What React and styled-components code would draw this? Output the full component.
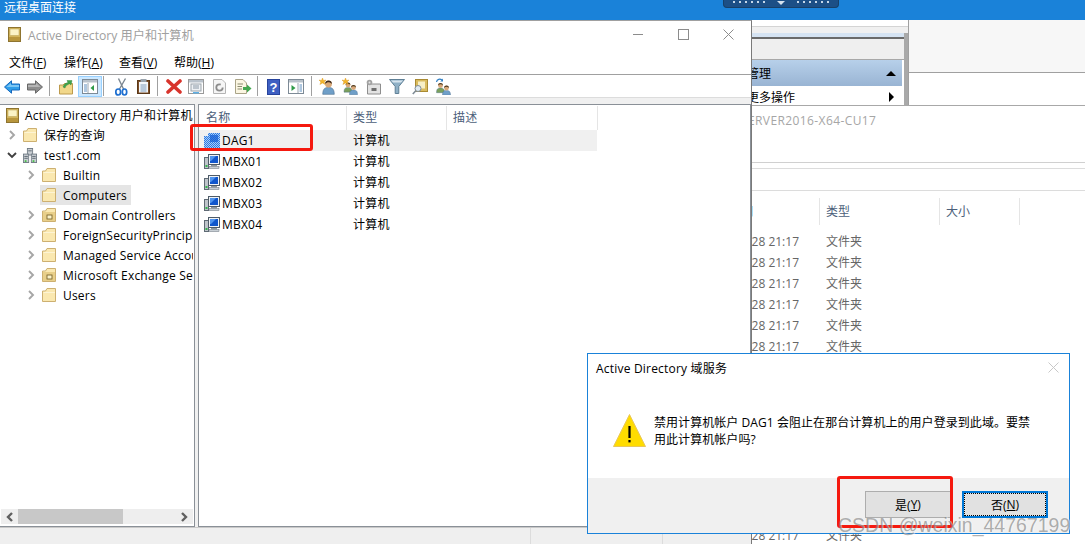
import React from "react";
import styled, { createGlobalStyle } from "styled-components";

const treeItems = [
  { label: "保存的查询", depth: 1, icon: "folder", arrow: "closed" },
  { label: "test1.com", depth: 1, icon: "domain", arrow: "open" },
  { label: "Builtin", depth: 2, icon: "folder", arrow: "closed" },
  { label: "Computers", depth: 2, icon: "folder", selected: true },
  { label: "Domain Controllers", depth: 2, icon: "ou", arrow: "closed" },
  { label: "ForeignSecurityPrincipals", depth: 2, icon: "folder", arrow: "closed" },
  { label: "Managed Service Accounts", depth: 2, icon: "folder", arrow: "closed" },
  { label: "Microsoft Exchange Security Groups", depth: 2, icon: "ou", arrow: "closed" },
  { label: "Users", depth: 2, icon: "folder", arrow: "closed" }
];

const computers = ["DAG1", "MBX01", "MBX02", "MBX03", "MBX04"];
const menus = [["文件", "F"], ["操作", "A"], ["查看", "V"], ["帮助", "H"]];
const fileRows = Array.from({ length: 15 }, (_, i) => i);

const Person = ({ x, y, s = 1, body = "#6f9fc8", hair = "#5a3a22", face = "#d9a878" }) => (
  <g transform={`translate(${x} ${y}) scale(${s})`}>
    <path d="M-5 9 C-5 4 -3 3 0 3 C3 3 5 4 5 9 Z" fill={body} stroke="#44688a" strokeWidth=".5" />
    <circle cx="0" cy="0" r="3" fill={face} />
    <path d="M-3 0 C-3 -4 3 -4 3 0 C1 -2 -1 -2 -3 0 Z" fill={hair} />
  </g>
);

const Star = ({ x, y }) => (
  <path
    transform={`translate(${x} ${y})`}
    d="M0 -3.5 L1 -1 L3.5 -1.5 L1.6 .4 L2.6 3 L0 1.5 L-2.6 3 L-1.6 .4 L-3.5 -1.5 L-1 -1 Z"
    fill="#f4b62c"
    stroke="#d98f10"
    strokeWidth=".4"
  />
);

const BackIcon = () => (
  <svg width="16" height="14" viewBox="0 0 16 14">
    <path d="M.5 7 L7.5 .8 V4 H15.5 V10 H7.5 V13.2 Z" fill="#2f9de8" stroke="#1668bd" />
    <path d="M2.5 7 L7 3 V5 H15 V7 Z" fill="#7cc6f4" />
  </svg>
);

const ForwardIcon = () => (
  <svg width="16" height="14" viewBox="0 0 16 14">
    <path d="M15.5 7 L8.5 .8 V4 H.5 V10 H8.5 V13.2 Z" fill="#8e8e8e" stroke="#686868" />
    <path d="M1 5 H9 V3 L13.5 7 H1 Z" fill="#b5b5b5" />
  </svg>
);

const FolderUpIcon = () => (
  <svg width="16" height="16" viewBox="0 0 16 16">
    <path d="M1.5 6 H5 L6.5 4.5 H14.5 V15 H1.5 Z" fill="#f1d78a" stroke="#bd9a4c" />
    <path d="M5 8 C6 5 8 4 10 3.5 L9 1.5 L14 1.5 L13 6 L11.5 4.8 C9.5 5.5 7.5 7 7 9 Z" fill="#3fa34d" stroke="#2a7d36" strokeWidth=".4" />
  </svg>
);

const WindowBase = ({ children, light }) => (
  <svg width="16" height="15" viewBox="0 0 16 15">
    <rect x=".5" y=".5" width="15" height="14" fill="#fff" stroke={light ? "#9a9a9a" : "#7d8a96"} />
    <rect x="1" y="1" width="14" height="2.5" fill="#b9c2cb" />
    {children}
  </svg>
);

const TreeViewIcon = () => (
  <WindowBase>
    <path d="M6 4 V14" stroke="#9aa6b1" />
    <path d="M2 6 H5 M2 8 H5 M2 10 H5 M2 12 H5" stroke="#5e8fc0" />
    <path d="M12 6 L8.5 9 L12 12 Z" fill="#2f9b48" />
  </WindowBase>
);

const ViewIcon = () => (
  <WindowBase>
    <path d="M10 4 V14" stroke="#9aa6b1" />
    <path d="M3.5 6 L7.5 9 L3.5 12 Z" fill="#2f9b48" />
    <path d="M11.5 6 H14 M11.5 8 H14 M11.5 10 H14 M11.5 12 H14" stroke="#5e8fc0" />
  </WindowBase>
);

const CutIcon = () => (
  <svg width="13" height="18" viewBox="0 0 13 18">
    <path d="M10.5 .5 L4.5 11 M3.5 .5 L8.5 11" stroke="#7c8791" strokeWidth="1.4" fill="none" />
    <ellipse cx="3.2" cy="14" rx="2.4" ry="3" fill="none" stroke="#1e6fd0" strokeWidth="1.7" />
    <ellipse cx="9.5" cy="14" rx="2.2" ry="3" fill="none" stroke="#1e6fd0" strokeWidth="1.7" />
  </svg>
);

const PasteIcon = () => (
  <svg width="13" height="15" viewBox="0 0 13 15">
    <rect x=".5" y="1.5" width="12" height="13" fill="#7d4f2a" stroke="#5b3818" />
    <rect x="2" y="3" width="9" height="10.5" fill="#f4f7fa" />
    <rect x="3.5" y="0" width="6" height="3" fill="#9aa4ad" />
    <path d="M3.5 6 H9.5 M3.5 8 H9.5 M3.5 10 H9.5 M3.5 12 H9.5" stroke="#7f9cba" />
  </svg>
);

const DeleteIcon = () => (
  <svg width="16" height="15" viewBox="0 0 16 15">
    <path d="M2 2 L14 13 M14 2 L2 13" stroke="#d8342c" strokeWidth="3.6" strokeLinecap="round" />
  </svg>
);

const PropsIcon = () => (
  <WindowBase light>
    <rect x="3" y="5" width="10" height="7" fill="#eef1f4" stroke="#9aa3ab" />
    <path d="M5 7 H11 M5 9 H11" stroke="#8a98a6" />
    <rect x="5" y="13" width="6" height="1.5" fill="#5eb0e5" />
  </WindowBase>
);

const RefreshIcon = () => (
  <svg width="13" height="15" viewBox="0 0 13 15">
    <path d="M.5 .5 H9 L12.5 4 V14.5 H.5 Z" fill="#f5f5f5" stroke="#b4b4b4" />
    <circle cx="6.5" cy="8.5" r="3.2" fill="none" stroke="#8c8c8c" strokeWidth="1.8" strokeDasharray="16 4" />
  </svg>
);

const ExportIcon = () => (
  <svg width="17" height="15" viewBox="0 0 17 15">
    <path d="M.5 .5 H8 L11.5 4 V14.5 H.5 Z" fill="#fbf6e2" stroke="#aaa488" />
    <path d="M2.5 5 H8 M2.5 7.5 H7 M2.5 10 H7" stroke="#8b8b70" />
    <path d="M8 8 H12 V5.5 L16.5 9.5 L12 13.5 V11 H8 Z" fill="#43a84f" />
  </svg>
);

const HelpIcon = () => (
  <svg width="13" height="16" viewBox="0 0 13 16">
    <rect width="13" height="16" fill="#27439c" />
    <rect x="1" y="1" width="11" height="14" fill="#3e5fc2" />
    <text x="6.5" y="13" textAnchor="middle" fontSize="13" fontWeight="700" fill="#fff" fontFamily="Liberation Sans">?</text>
  </svg>
);

const NewUserIcon = () => (
  <svg width="16" height="17" viewBox="0 0 16 17">
    <Person x={9.5} y={6} s={1.15} hair="#3c2a1c" />
    <Star x={3.5} y={3.5} />
  </svg>
);

const NewGroupIcon = () => (
  <svg width="16" height="17" viewBox="0 0 16 17">
    <Person x={6} y={7} s={.8} body="#7aa05c" hair="#4b3a22" />
    <Person x={11.5} y={9.5} s={.8} hair="#4b3a22" />
    <Star x={3.5} y={3.5} />
  </svg>
);

const NewOuIcon = () => (
  <svg width="16" height="16" viewBox="0 0 16 16">
    <path d="M1.5 5 H14.5 V15 H1.5 Z" fill="#e3e3e3" stroke="#8e8e8e" />
    <rect x="5.5" y="9" width="5" height="3" fill="#6e6e6e" />
    <circle cx="3.5" cy="3.5" r="2.8" fill="#a3a3a3" />
    <circle cx="3.5" cy="3.5" r="1" fill="#e5e5e5" />
  </svg>
);

const FilterIcon = () => (
  <svg width="16" height="15" viewBox="0 0 16 15">
    <path d="M.5 .5 H15.5 L9.8 7.5 V14.5 H6.2 V7.5 Z" fill="#8fb0c6" stroke="#5f7f95" />
    <path d="M2 1.5 H14 L12 3.5 H4 Z" fill="#d6e4ee" />
  </svg>
);

const FindIcon = () => (
  <svg width="16" height="16" viewBox="0 0 16 16">
    <rect x="3.5" y=".5" width="12" height="12" fill="#d9bb5e" stroke="#a98a33" />
    <rect x="6" y="2.5" width="7" height="7" fill="#f7efc6" />
    <circle cx="6" cy="9.5" r="3" fill="#dfeaf2" stroke="#7f8c96" />
    <path d="M3.8 11.8 L.8 15" stroke="#7f8c96" strokeWidth="1.6" />
  </svg>
);

const MoveIcon = () => (
  <svg width="16" height="17" viewBox="0 0 16 17">
    <Person x={5.5} y={7.5} s={.8} body="#7aa05c" hair="#4b3a22" />
    <Person x={11.5} y={10} s={.8} hair="#4b3a22" />
    <path d="M1.5 4 C2 1 5 .5 7 2" fill="none" stroke="#2f7fc4" strokeWidth="1.2" />
    <path d="M8 .5 V3.5 H5.2 Z" fill="#2f7fc4" />
  </svg>
);

const RootIcon = () => (
  <svg width="13" height="15" viewBox="0 0 13 15">
    <rect x=".5" y=".5" width="12" height="14" fill="#d3b55c" stroke="#8e7430" />
    <rect x="2" y="2" width="9" height="6.5" fill="#fbf3c6" stroke="#b89f52" strokeWidth=".5" />
    <rect x="1" y="10" width="11" height="4" fill="#b8963c" />
  </svg>
);

const FolderIcon = ({ badge }) => (
  <svg width="14" height="14" viewBox="0 0 14 14">
    <path d="M.5 3 H3.5 L5 .5 H13.5 V13.5 H.5 Z" fill="#fae8b0" stroke="#cdb071" />
    <path d="M1.5 4 H13 V5 H1.5 Z" fill="#fdf4d4" />
    {badge && (
      <>
        <rect x="1" y="4" width="12" height="9" fill="#e8cf8a" />
        <rect x="5" y="7" width="5" height="4" fill="#fbf2c9" stroke="#6f5a22" strokeWidth=".8" />
      </>
    )}
  </svg>
);

const DomainIcon = () => (
  <svg width="14" height="15" viewBox="0 0 16 16" preserveAspectRatio="none">
    <rect x="5" y=".5" width="6" height="7" fill="#c9ced3" stroke="#6f7a84" />
    <rect x=".5" y="6.5" width="6" height="9" fill="#c9ced3" stroke="#6f7a84" />
    <rect x="9.5" y="6.5" width="6" height="9" fill="#c9ced3" stroke="#6f7a84" />
    <path d="M6 3 H10 M1.5 9 H5.5 M1.5 11 H5.5 M10.5 9 H14.5 M10.5 11 H14.5" stroke="#5b6670" />
    <rect x="2" y="13" width="2" height="2" fill="#4cc24c" />
    <rect x="11" y="13" width="2" height="2" fill="#4cc24c" />
  </svg>
);

const ComputerIcon = () => (
  <svg width="16" height="15" viewBox="0 0 16 15">
    <rect x=".5" y="3.5" width="4" height="11" fill="#bfc5ca" stroke="#5f6a74" />
    <rect x="1.5" y="11" width="2" height="2" fill="#33b54a" />
    <rect x="4.5" y=".5" width="11" height="10" fill="#f0f3f6" stroke="#4e5b68" />
    <rect x="6" y="2" width="8" height="7" fill="#1056cc" />
    <path d="M6 2 H12 L7 7 H6 Z" fill="#4f94ee" />
    <rect x="7" y="11" width="6" height="1.5" fill="#8d979f" />
    <rect x="5" y="12.5" width="10" height="2" fill="#c8cfd5" stroke="#66717b" strokeWidth=".5" />
  </svg>
);

// the selected computer in the list is drawn blue and dithered
const DitheredComputerIcon = () => (
  <svg width="16" height="15" viewBox="0 0 16 15">
    <defs>
      <pattern id="dither" width="2" height="2" patternUnits="userSpaceOnUse">
        <rect width="2" height="2" fill="#2a78e4" />
        <rect width="1" height="1" fill="#a9cdf6" />
        <rect x="1" y="1" width="1" height="1" fill="#a9cdf6" />
      </pattern>
    </defs>
    <rect y="3" width="5" height="12" fill="url(#dither)" />
    <rect x="4" width="12" height="15" fill="url(#dither)" />
    <rect x="6" y="2" width="8" height="7" fill="#1a62d6" opacity=".75" />
  </svg>
);

const Chevron = ({ open, small }) => (
  <svg width={open ? 10 : 7} height={open ? 7 : 10} viewBox={open ? "0 0 10 7" : "0 0 7 10"}>
    <path
      d={open ? "M1 1 L5 5 L9 1" : "M1 1 L5 5 L1 9"}
      fill="none"
      stroke={open ? "#404040" : small ? "#606060" : "#a6a6a6"}
      strokeWidth={small ? 2.4 : 1.9}
    />
  </svg>
);

const CloseMark = ({ color, size }) => (
  <svg width={size} height={size} viewBox="0 0 11 11">
    <path d="M.5 .5 L10.5 10.5 M10.5 .5 L.5 10.5" stroke={color} />
  </svg>
);

const WarnIcon = () => (
  <svg width="33" height="33" viewBox="0 0 33 33">
    <path d="M16.5 .5 L32.5 32.5 H.5 Z" fill="#ffdc00" stroke="#e9c75a" />
    <rect x="15.4" y="12" width="2.2" height="12" fill="#000" />
    <rect x="15.4" y="26" width="2.2" height="2.4" fill="#000" />
  </svg>
);

const treeIcon = item => {
  if (item.icon === "domain") return <DomainIcon />;
  return <FolderIcon badge={item.icon === "ou"} />;
};

export default function App() {
  return (
    <Page>
      <GlobalStyle />
      <RemoteBar>
        <RemoteTitle>远程桌面连接</RemoteTitle>
        <ConnectionPill>
          <Dots>{[0, 1, 2, 3, 4, 5].map(i => <Dot key={i} />)}</Dots>
          <PillArrow />
          <Dots>{[0, 1, 2, 3, 4, 5].map(i => <Dot key={i} />)}</Dots>
        </ConnectionPill>
      </RemoteBar>

      <Desktop>
        <BackWindow>
          <BackTop>
            <ActionsColumn>
              <BackStrip />
              <ActionsBody>
                <ActionsPanel>
                  <PanelHead />
                  <PanelBlue>
                    <span>管理</span>
                    <UpTriangle />
                  </PanelBlue>
                  <PanelItem>
                    <span>更多操作</span>
                    <RightTriangle />
                  </PanelItem>
                </ActionsPanel>
                <ActionsRail />
              </ActionsBody>
            </ActionsColumn>
            <BackFill>
              <BackFillGrey />
            </BackFill>
          </BackTop>
          <PathBox>SERVER2016-X64-CU17</PathBox>
          <PathGap />
          <FileHead>
            <FileHeadCell $first>修改日期</FileHeadCell>
            <FileHeadCell>类型</FileHeadCell>
            <FileHeadCell>大小</FileHeadCell>
          </FileHead>
          <FileList>
            {fileRows.map(i => (
              <FileRow key={i}>
                <FileDate>2021/7/28 21:17</FileDate>
                <FileType>文件夹</FileType>
              </FileRow>
            ))}
          </FileList>
        </BackWindow>

        <AdWindow>
          <TitleRow>
            <RootIcon />
            <TitleText>Active Directory 用户和计算机</TitleText>
            <WinControls>
              <MinMark />
              <MaxMark />
              <CloseMark color="#8c8c8c" size={11} />
            </WinControls>
          </TitleRow>
          <MenuRow>
            {menus.map(([name, key]) => (
              <MenuItem key={key}>
                {name}(<u>{key}</u>)
              </MenuItem>
            ))}
          </MenuRow>
          <Toolbar>
            <Tool $w={22}><BackIcon /></Tool>
            <Tool $w={24}><ForwardIcon /></Tool>
            <Sep $l={2} $r={4} />
            <Tool $w={24}><FolderUpIcon /></Tool>
            <Tool $w={24} $active><TreeViewIcon /></Tool>
            <Sep $l={1} $r={6} />
            <Tool $w={22}><CutIcon /></Tool>
            <Tool $w={22}><PasteIcon /></Tool>
            <Sep $l={3} $r={5} />
            <Tool $w={22}><DeleteIcon /></Tool>
            <Tool $w={22}><PropsIcon /></Tool>
            <Tool $w={24}><RefreshIcon /></Tool>
            <Tool $w={24}><ExportIcon /></Tool>
            <Sep $l={2} $r={4} />
            <Tool $w={22}><HelpIcon /></Tool>
            <Tool $w={24}><ViewIcon /></Tool>
            <Sep $l={3} $r={4} />
            <Tool $w={22}><NewUserIcon /></Tool>
            <Tool $w={24}><NewGroupIcon /></Tool>
            <Tool $w={23}><NewOuIcon /></Tool>
            <Tool $w={23}><FilterIcon /></Tool>
            <Tool $w={23}><FindIcon /></Tool>
            <Tool $w={24}><MoveIcon /></Tool>
          </Toolbar>
          <GreyStrip />
          <Panes>
            <TreePane>
              <TreeBody>
                <RootRow>
                  <RootIcon />
                  <span>Active Directory 用户和计算机</span>
                </RootRow>
                {treeItems.map(item => (
                  <TreeRow key={item.label} $depth={item.depth}>
                    <Expander>
                      {item.arrow && <Chevron open={item.arrow === "open"} />}
                    </Expander>
                    <TreeLabel $selected={item.selected}>
                      {treeIcon(item)}
                      <span>{item.label}</span>
                    </TreeLabel>
                  </TreeRow>
                ))}
              </TreeBody>
              <HScroll>
                <ScrollBtn><Chevron small /></ScrollBtn>
                <ScrollThumb />
                <ScrollBtn $right><Chevron small /></ScrollBtn>
              </HScroll>
            </TreePane>
            <ListPane>
              <ListHead>
                <ListHeadCell>名称</ListHeadCell>
                <ListHeadCell>类型</ListHeadCell>
                <ListHeadCell>描述</ListHeadCell>
              </ListHead>
              {computers.map((name, i) => (
                <ListRow key={name} $selected={i === 0}>
                  <NameCell>
                    {i === 0 ? <DitheredComputerIcon /> : <ComputerIcon />}
                    <span>{name}</span>
                  </NameCell>
                  <TypeCell>计算机</TypeCell>
                </ListRow>
              ))}
            </ListPane>
          </Panes>
          <StatusBar>
            <StatusCell $w={531} />
            <StatusCell $w={132} />
          </StatusBar>
        </AdWindow>

        <Dialog>
          <DialogTitle>
            <span>Active Directory 域服务</span>
            <CloseMark color="#c8c8c8" size={11} />
          </DialogTitle>
          <DialogBody>
            <WarnIcon />
            <DialogText>
              禁用计算机帐户 DAG1 会阻止在那台计算机上的用户登录到此域。要禁
              <br />
              用此计算机帐户吗?
            </DialogText>
          </DialogBody>
          <DialogFooter>
            <DialogButton>
              是(<u>Y</u>)
            </DialogButton>
            <DialogButton $focused>
              <FocusRing>
                否(<u>N</u>)
              </FocusRing>
            </DialogButton>
          </DialogFooter>
        </Dialog>

        <RedBox $left={190} $top={104} $width={123} $height={27} />
        <RedBox $left={837} $top={456} $width={116} $height={52} />
        <Watermark>CSDN @weixin_44767199</Watermark>
      </Desktop>
    </Page>
  );
}

const GlobalStyle = createGlobalStyle`
  html, body {
    margin: 0;
    height: 100%;
    overflow: hidden;
    background: #fff;
  }
  body {
    font-family: "Open Sans", "Noto Sans CJK SC", sans-serif;
    font-size: 12px;
    color: #000;
  }
  #root {
    height: 100%;
  }
`;

const Page = styled.div`
  height: 544px;
  width: 1085px;
  display: flex;
  flex-direction: column;
  overflow: hidden;
`;

const RemoteBar = styled.div`
  height: 20px;
  flex: none;
  background: #1a82d9;
  position: relative;
  display: flex;
  align-items: center;
  padding-left: 4px;
`;

const RemoteTitle = styled.span`
  color: #fff;
  font-size: 12px;
  position: relative;
  top: -3px;
`;

const ConnectionPill = styled.div`
  position: absolute;
  left: 723px;
  top: 0;
  width: 116px;
  height: 8px;
  box-sizing: border-box;
  background: #1c4f86;
  border: 1px solid #174069;
  border-top: 0;
  border-radius: 0 0 4px 4px;
  display: flex;
  justify-content: space-between;
  align-items: flex-start;
  padding: 1px 9px 0;
`;

const Dots = styled.div`
  display: flex;
  gap: 4px;
`;

const Dot = styled.i`
  width: 2px;
  height: 2px;
  background: #c6d7e8;
`;

const PillArrow = styled.i`
  width: 0;
  height: 0;
  border: 4px solid transparent;
  border-top-color: #d5e2ee;
`;

const Desktop = styled.div`
  flex: 1;
  position: relative;
  overflow: hidden;
`;

const BackWindow = styled.div`
  position: absolute;
  inset: 0;
  background: #fff;
  display: flex;
  flex-direction: column;
`;

const BackTop = styled.div`
  height: 85px;
  flex: none;
  display: flex;
`;

const ActionsColumn = styled.div`
  width: 908px;
  flex: none;
  border-right: 1px solid #a0a0a0;
  display: flex;
  flex-direction: column;
`;

const BackStrip = styled.div`
  height: 6px;
  flex: none;
  margin-bottom: 4px;
  border-bottom: 1px solid #d4d4d4;
  box-shadow: 0 6px 0 #f0f0f0;
`;

const ActionsBody = styled.div`
  flex: 1;
  display: flex;
  background: linear-gradient(#d5e3f2 4px, transparent 4px);
  margin-top: 2px;
`;

const ActionsPanel = styled.div`
  flex: 1;
  padding-top: 4px;
  padding-right: 2px;
  display: flex;
  flex-direction: column;
`;

const PanelHead = styled.div`
  height: 20px;
  background: #efefef;
  border-top: 2px solid #6a6a6a;
  border-bottom: 1px solid #a8a8a8;
  margin-right: -2px;
`;

const PanelBlue = styled.div`
  height: 26px;
  flex: none;
  box-sizing: border-box;
  background: linear-gradient(#b7d0ea, #99b4d3);
  display: flex;
  justify-content: space-between;
  align-items: center;
  padding: 0 6px 0 747px;
  font-size: 12px;
`;

const PanelItem = styled.div`
  flex: 1;
  display: flex;
  justify-content: space-between;
  align-items: center;
  padding: 2px 8px 0 747px;
  font-size: 12px;
`;

const UpTriangle = styled.i`
  width: 0;
  height: 0;
  border-left: 5px solid transparent;
  border-right: 5px solid transparent;
  border-bottom: 5px solid #000;
`;

const RightTriangle = styled.i`
  width: 0;
  height: 0;
  border-top: 5px solid transparent;
  border-bottom: 5px solid transparent;
  border-left: 5px solid #000;
`;

const ActionsRail = styled.div`
  width: 4px;
  flex: none;
  background: #a9a9a9;
`;

const BackFill = styled.div`
  flex: 1;
`;

const BackFillGrey = styled.div`
  height: 52px;
  background: #f7f7f7;
  border-bottom: 1px solid #a0a0a0;
`;

const PathBox = styled.div`
  height: 58px;
  flex: none;
  box-sizing: border-box;
  border-top: 1px solid #a8a8a8;
  border-bottom: 1px solid #d0d0d0;
  padding: 6px 0 0 741px;
  color: #a6a6a6;
  font-size: 12px;
  line-height: 18px;
  letter-spacing: 0.4px;
`;

const PathGap = styled.div`
  height: 23px;
  flex: none;
  box-sizing: border-box;
  margin-top: 5px;
  border-top: 1px solid #dcdcdc;
  border-bottom: 1px solid #dcdcdc;
`;

const FileHead = styled.div`
  display: grid;
  grid-template-columns: 820px 120px 80px;
  height: 27px;
  flex: none;
  margin-top: 7px;
`;

const FileHeadCell = styled.div`
  border-right: 1px solid #e5e5e5;
  color: #4c607a;
  line-height: 27px;
  padding-left: ${p => (p.$first ? "705px" : "6px")};
`;

const FileList = styled.div`
  margin-top: 6px;
`;

const FileRow = styled.div`
  display: grid;
  grid-template-columns: 799px 27px 1fr;
  height: 21px;
  line-height: 21px;
  color: #666;
`;

const FileDate = styled.div`
  text-align: right;
`;

const FileType = styled.div`
  grid-column: 3;
`;

const AdWindow = styled.div`
  position: absolute;
  left: 0;
  top: 0;
  bottom: 0;
  width: 752px;
  box-sizing: border-box;
  background: #fff;
  border-top: 1px solid #a0a0a0;
  border-right: 1px solid #7a7a7a;
  display: flex;
  flex-direction: column;
`;

const TitleRow = styled.div`
  height: 33px;
  flex: none;
  box-sizing: border-box;
  display: flex;
  align-items: center;
  padding: 0 0 6px 8px;
`;

const TitleText = styled.span`
  margin-left: 7px;
  color: #a0a0a0;
  font-size: 12.2px;
`;

const WinControls = styled.div`
  margin-left: auto;
  box-sizing: border-box;
  width: 118px;
  padding-right: 17px;
  display: flex;
  justify-content: space-between;
  align-items: center;
`;

const MinMark = styled.i`
  width: 10px;
  height: 1px;
  background: #8c8c8c;
`;

const MaxMark = styled.i`
  width: 9px;
  height: 9px;
  border: 1px solid #8c8c8c;
`;

const MenuRow = styled.div`
  flex: none;
  box-sizing: border-box;
  border-bottom: 1px solid #a0a0a0;
  height: 21px;
  display: flex;
  padding-left: 9px;
  line-height: 17px;
`;

const MenuItem = styled.span`
  width: 55px;
  flex: none;
  white-space: nowrap;
`;

const Toolbar = styled.div`
  height: 21px;
  flex: none;
  display: flex;
  align-items: stretch;
  padding: 1px 0 0 1px;
  border-bottom: 1px solid #dcdcdc;
`;

const Tool = styled.div`
  width: ${p => p.$w}px;
  flex: none;
  box-sizing: border-box;
  display: flex;
  align-items: center;
  justify-content: center;
  background: ${p => (p.$active ? "#cce8ff" : "transparent")};
  border: 1px solid ${p => (p.$active ? "#99d1ff" : "transparent")};
`;

const Sep = styled.i`
  width: 1px;
  flex: none;
  background: #a0a0a0;
  margin: 0 ${p => p.$r}px 1px ${p => p.$l}px;
`;

const GreyStrip = styled.div`
  height: 6px;
  flex: none;
  background: #f0f0f0;
`;

const Panes = styled.div`
  height: 423px;
  flex: none;
  display: flex;
  gap: 3px;
  background: #f0f0f0;
`;

const TreePane = styled.div`
  width: 195px;
  flex: none;
  box-sizing: border-box;
  background: #fff;
  border: 1px solid #8a9097;
  border-width: 1px 1px 1px 0;
  display: flex;
  flex-direction: column;
  padding-bottom: 1px;
`;

const TreeBody = styled.div`
  flex: 1;
  overflow: hidden;
  letter-spacing: 0.2px;
  margin-right: 1px;
`;

const RootRow = styled.div`
  height: 20px;
  display: flex;
  align-items: center;
  gap: 6px;
  padding-left: 6px;
  white-space: nowrap;
`;

const TreeRow = styled.div`
  height: 20px;
  display: flex;
  align-items: center;
  white-space: nowrap;
  padding-left: ${p => (p.$depth === 1 ? 4 : 23)}px;
`;

const Expander = styled.span`
  width: 19px;
  flex: none;
  display: flex;
  justify-content: center;
  padding-right: 3px;
  box-sizing: border-box;
`;

const TreeLabel = styled.div`
  height: 20px;
  display: flex;
  align-items: center;
  gap: 7px;
  margin-left: -2px;
  padding: 0 4px 0 2px;
  background: ${p => (p.$selected ? "#e5e5e5" : "transparent")};
`;

const HScroll = styled.div`
  height: 15px;
  flex: none;
  margin: 0 1px 1px;
  background: #eee;
  display: flex;
  align-items: center;
`;

const ScrollBtn = styled.span`
  width: 17px;
  flex: none;
  display: flex;
  justify-content: center;
  transform: ${p => (p.$right ? "none" : "scaleX(-1)")};
  margin-left: ${p => (p.$right ? "auto" : "0")};
`;

const ScrollThumb = styled.div`
  width: 105px;
  height: 15px;
  background: #c8c8c8;
`;

const ListPane = styled.div`
  flex: 1;
  box-sizing: border-box;
  background: #fff;
  border: 1px solid #8a9097;
  letter-spacing: 0.2px;
`;

const ListHead = styled.div`
  display: grid;
  grid-template-columns: 148px 100px 151px;
  width: 399px;
  height: 25px;
`;

const ListHeadCell = styled.div`
  padding-left: 7px;
  line-height: 23px;
  color: #4c607a;
  border-right: 1px solid #e5e5e5;
  margin-top: 1px;
  &:nth-child(n + 2) {
    padding-left: 6px;
  }
`;

const ListRow = styled.div`
  display: grid;
  grid-template-columns: 148px 1fr;
  width: 398px;
  height: 21px;
  background: ${p => (p.$selected ? "#f0f0f0" : "transparent")};
`;

const NameCell = styled.div`
  display: flex;
  align-items: center;
  gap: 2px;
  padding-left: 5px;
`;

const TypeCell = styled.div`
  line-height: 21px;
  padding-left: 6px;
`;

const StatusBar = styled.div`
  flex: 1;
  display: flex;
  background: #efefef;
  border-top: 1px solid #c9c9c9;
`;

const StatusCell = styled.div`
  width: ${p => p.$w}px;
  box-sizing: border-box;
  border-right: 1px solid #dcdcdc;
`;

const Dialog = styled.div`
  position: absolute;
  left: 587px;
  top: 333px;
  width: 483px;
  height: 181px;
  box-sizing: border-box;
  background: #fff;
  border: 1px solid #1a82d9;
  display: flex;
  flex-direction: column;
`;

const DialogTitle = styled.div`
  height: 27px;
  flex: none;
  display: flex;
  justify-content: space-between;
  align-items: center;
  padding: 0 10px 0 8px;
  letter-spacing: 0.2px;
`;

const DialogBody = styled.div`
  flex: 1;
  display: flex;
  align-items: flex-start;
  gap: 8px;
  padding: 33px 0 0 25px;
`;

const DialogText = styled.div`
  line-height: 17px;
  white-space: nowrap;
  letter-spacing: 0.06px;
`;

const DialogFooter = styled.div`
  height: 55px;
  flex: none;
  box-sizing: border-box;
  background: #f0f0f0;
  display: flex;
  justify-content: flex-end;
  gap: 11px;
  padding: 13px 21px 0 0;
`;

const DialogButton = styled.div`
  width: 86px;
  height: 27px;
  box-sizing: border-box;
  background: #e1e1e1;
  border: ${p => (p.$focused ? "2px solid #0078d7" : "1px solid #adadad")};
  display: flex;
  align-items: center;
  justify-content: center;
`;

const FocusRing = styled.div`
  width: 100%;
  height: 100%;
  box-sizing: border-box;
  border: 1px dotted #000;
  display: flex;
  align-items: center;
  justify-content: center;
`;

const RedBox = styled.div`
  position: absolute;
  left: ${p => p.$left}px;
  top: ${p => p.$top}px;
  width: ${p => p.$width}px;
  height: ${p => p.$height}px;
  box-sizing: border-box;
  border: 3px solid #f5190f;
  border-radius: 3px;
`;

const Watermark = styled.div`
  position: absolute;
  left: 838px;
  top: 494px;
  font-family: "Liberation Sans", sans-serif;
  font-size: 19.5px;
  line-height: 23px;
  color: rgba(110, 110, 110, 0.55);
  text-shadow: 1px 0 0 rgba(255, 255, 255, 0.5);
  white-space: nowrap;
`;
